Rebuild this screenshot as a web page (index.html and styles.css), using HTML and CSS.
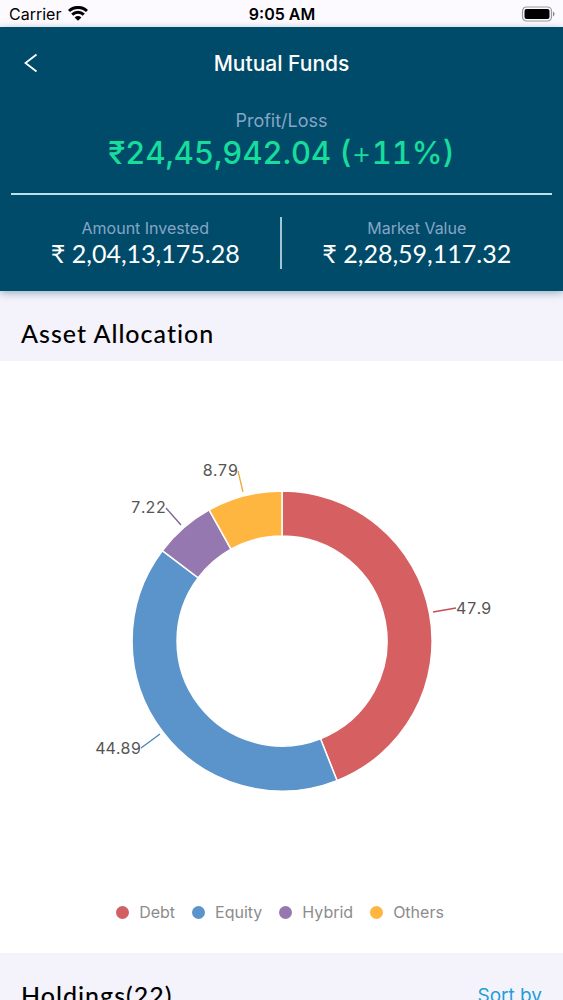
FILE: index.html
```
<!doctype html>
<html lang="en">
  <head>
    <title>Mutual Funds</title>
    <meta charset="UTF-8">
    <meta name="viewport" content="width=device-width, initial-scale=1">
    <link rel="stylesheet" href="styles.css">
  </head>
  <body>
    <div class="app">
      <div class="status-bar">
        <div class="carrier">
          <span>Carrier</span>
          <svg width="20" height="15" viewBox="0 0 20 15" aria-hidden="true">
            <g fill="none" stroke="#000" stroke-width="3">
              <path d="M1 5C6 .3 14 .3 19 5"/>
              <path d="M4.2 8.6C7.6 5.4 12.4 5.4 15.8 8.6"/>
            </g>
            <path d="M6.6 11.4C8.6 9.6 11.4 9.6 13.4 11.4L10 14.8z"/>
          </svg>
        </div>
        <div class="clock">9:05 AM</div>
        <div class="battery">
          <svg width="34" height="16" viewBox="0 0 34 16" aria-hidden="true">
            <rect x="1.5" y="1" width="29" height="14" rx="4" fill="none" stroke="#999" stroke-width="1.2"/>
            <rect x="3.5" y="3" width="25" height="10" rx="2"/>
            <path d="M32 5.6C34 6.4 34 9.6 32 10.4z" fill="#888"/>
          </svg>
        </div>
      </div>

      <header class="summary">
        <div class="nav">
          <button type="button" class="back" aria-label="Back">
            <svg width="14" height="20" viewBox="0 0 14 20" aria-hidden="true">
              <path d="M12.5 1.5L1.5 10L12.5 18.5" fill="none" stroke="#fff" stroke-width="1.8"/>
            </svg>
          </button>
          <h1>Mutual Funds</h1>
        </div>
        <div class="profit">
          <div class="label">Profit/Loss</div>
          <div class="amount">₹24,45,942.04 (<span class="sign">+</span>11%)</div>
        </div>
        <div class="totals">
          <div class="total">
            <div class="label">Amount Invested</div>
            <div class="value">₹ 2,04,13,175.28</div>
          </div>
          <div class="total">
            <div class="label">Market Value</div>
            <div class="value">₹ 2,28,59,117.32</div>
          </div>
        </div>
      </header>

      <div class="section-title">
        <h2>Asset Allocation</h2>
      </div>
      <section class="chart">
        <svg class="donut" viewBox="-220 -200 440 370" role="img" aria-label="Asset allocation">
          <g stroke="#fff" stroke-width="1.5">
            <path fill="#d66061" d="M0 -150A150 150 0 0 1 55 139.6L38.5 97.7A105 105 0 0 0 0 -105z"/>
            <path fill="#5b94ca" d="M55 139.6A150 150 0 0 1 -119.7 -90.3L-83.8 -63.2A105 105 0 0 0 38.5 97.7z"/>
            <path fill="#9678b0" d="M-119.7 -90.3A150 150 0 0 1 -72.9 -131.1L-51 -91.8A105 105 0 0 0 -83.8 -63.2z"/>
            <path fill="#ffb640" d="M-72.9 -131.1A150 150 0 0 1 0 -150L0 -105A105 105 0 0 0 -51 -91.8z"/>
          </g>
          <g fill="none" stroke-width="1.3">
            <path stroke="#c05053" d="M151 -29L174 -33"/>
            <path stroke="#4b83b9" d="M-122 93L-141 107"/>
            <path stroke="#775f92" d="M-101 -116L-116 -133"/>
            <path stroke="#f0a73c" d="M-39 -149L-44 -170"/>
          </g>
          <g class="donut-labels">
            <text x="174" y="-27">47.9</text>
            <text x="-141" y="113" text-anchor="end">44.89</text>
            <text x="-116" y="-128" text-anchor="end">7.22</text>
            <text x="-44" y="-165" text-anchor="end">8.79</text>
          </g>
        </svg>
        <ul class="legend">
          <li class="debt">Debt</li>
          <li class="equity">Equity</li>
          <li class="hybrid">Hybrid</li>
          <li class="others">Others</li>
        </ul>
      </section>

      <div class="section-title">
        <h2>Holdings(22)</h2>
        <a href="#sort">Sort by</a>
      </div>
    </div>
  </body>
</html>
```
FILE: styles.css
```
* {
  box-sizing: border-box;
}

body {
  margin: 0;
  background-color: #f4f3fb;
  font-family: Inter, "Liberation Sans", sans-serif;
  color: #000;
}

h1, h2, ul {
  margin: 0;
  padding: 0;
}

.app {
  height: 100vh;
  overflow: hidden;
}

.status-bar {
  display: grid;
  grid-template-columns: 1fr auto 1fr;
  align-items: center;
  height: 27px;
  padding: 0 8px 0 9px;
  background-color: #fcfafe;
  font-size: 16px;
}

.carrier {
  display: flex;
  align-items: center;
  gap: 7px;
}

.clock {
  font-weight: 600;
}

.battery {
  display: flex;
  justify-content: flex-end;
}

.summary {
  position: relative;
  padding: 0 11px 22px;
  background-color: #004b69;
  box-shadow: 0 2px 8px rgba(0, 75, 105, 0.4);
  color: #fff;
  text-align: center;
}

.nav {
  display: grid;
  grid-template-columns: 40px 1fr 40px;
  align-items: center;
  height: 72px;
}

.back {
  display: flex;
  justify-content: center;
  padding: 8px 0;
  border: 0;
  background: none;
  cursor: pointer;
}

h1 {
  font-size: 21px;
  font-weight: 500;
}

.label {
  color: #86a5c6;
}

.profit {
  padding: 11px 0 20px;
  border-bottom: 2px solid #b9e2ea;
}

.profit .label {
  font-size: 18px;
  line-height: 22px;
}

.amount {
  color: #16dc9c;
  font-size: 31px;
  font-variant-numeric: tabular-nums;
  font-weight: 500;
  line-height: 41px;
}

.sign {
  font-weight: 300;
}

.totals {
  display: grid;
  grid-template-columns: 1fr 1fr;
  padding-top: 22px;
}

.total {
  height: 52px;
}

.total:first-child {
  border-right: 2px solid #a3c6d6;
}

.total .label {
  font-size: 16px;
  line-height: 22px;
}

.value {
  font-family: Lato, sans-serif;
  font-size: 25px;
  line-height: 28px;
}

.section-title {
  display: flex;
  justify-content: space-between;
  align-items: center;
  height: 70px;
  padding: 14px 21px 0;
}

h2 {
  font-family: Lato, sans-serif;
  font-size: 25px;
  font-weight: 500;
  letter-spacing: 1px;
}

.section-title a {
  color: #219fd8;
  font-size: 19px;
  text-decoration: none;
}

.chart {
  padding: 80px 0 31px;
  background-color: #fff;
}

.donut {
  display: block;
  width: 100%;
  max-width: 440px;
  margin: 0 auto;
}

.donut-labels {
  fill: #555;
  font-size: 16px;
  font-variant-numeric: tabular-nums;
}

.legend {
  display: flex;
  justify-content: center;
  gap: 17px;
  padding: 91px 3px 0 0;
  color: #8c8c8c;
  font-size: 16px;
  line-height: 20px;
  list-style: none;
}

.legend li {
  display: flex;
  align-items: center;
  gap: 10px;
}

.legend li::before {
  width: 13px;
  height: 13px;
  border-radius: 50%;
  background-color: currentColor;
  content: "";
}

.legend .debt::before {
  background-color: #d06062;
}

.legend .equity::before {
  background-color: #5b94ca;
}

.legend .hybrid::before {
  background-color: #9678b0;
}

.legend .others::before {
  background-color: #ffb640;
}
```
